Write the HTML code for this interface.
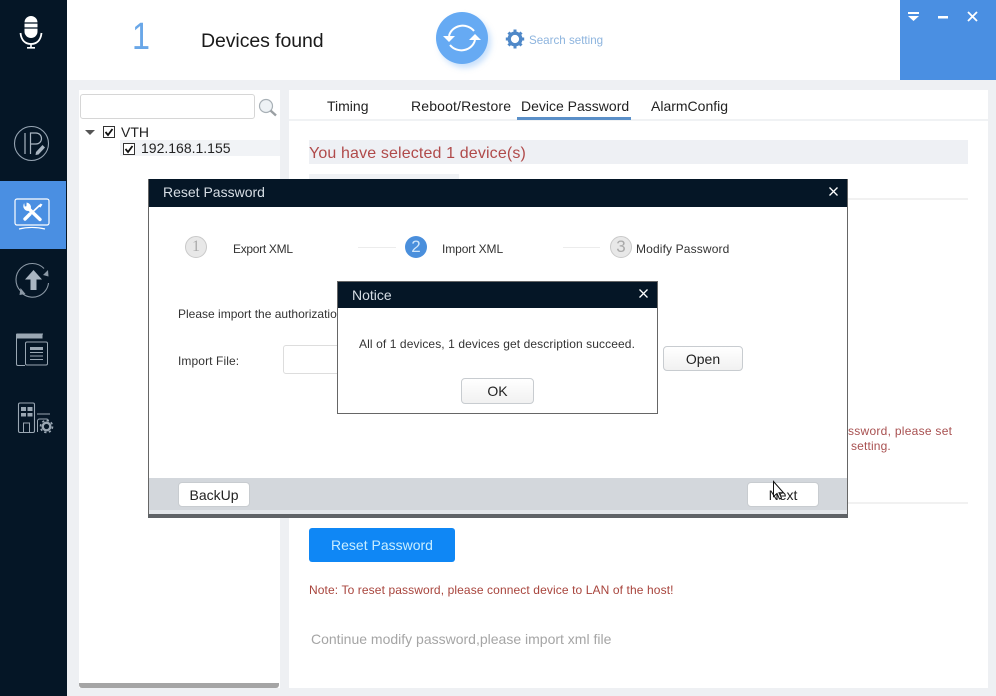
<!DOCTYPE html>
<html><head><meta charset="utf-8"><title>Reset Password</title>
<style>
html,body{margin:0;padding:0;width:996px;height:696px;overflow:hidden;background:#eef0f3;font-family:"Liberation Sans",sans-serif;}
.a{position:absolute;white-space:nowrap;}
.btn{position:absolute;box-sizing:border-box;border:1px solid #c8ccd0;border-radius:4px;background:linear-gradient(#fff,#f1f1f1);text-align:center;color:#222;font-size:14px;}
</style></head><body>
<div class="a" style="left:0;top:0;width:996px;height:696px;overflow:hidden">
<!-- top -->
<div class="a" style="left:67px;top:0;width:833px;height:80px;background:#fff"></div>
<div class="a" style="left:900px;top:0;width:96px;height:80px;background:#4a8fe2"></div>
<svg class="a" style="left:900px;top:0" width="96" height="80"><path d="M8 12h11v2H8zM8 16h11l-5.500 5z" fill="#fff"/><path d="M38 16h10v2.500H38z" fill="#fff"/><path d="M68 12l9 9M77 12l-9 9" stroke="#fff" stroke-width="1.800"/></svg>
<div class="a" style="left:132px;top:17px;font-size:38px;color:#69a7e8;line-height:40px;font-weight:normal;transform:scaleX(.85);transform-origin:left">1</div>
<div class="a" style="left:201px;top:30px;font-size:19.500px;color:#1a1a1a;line-height:22px;letter-spacing:-.08px">Devices found</div>
<div class="a" style="left:436px;top:12px;width:52px;height:52px;border-radius:50%;background:#66aaf3;box-shadow:3px 4px 6px rgba(102,170,243,.35)"></div>
<svg class="a" style="left:436px;top:12px" width="52" height="52" fill="none" stroke="#fff" stroke-width="2"><path d="M13 24A14 13 0 0 1 38 19"/><path d="M39 28A14 13 0 0 1 14 33"/><path d="M7 24h12l-6 6z" fill="#fff" stroke="none"/><path d="M33 28h12l-6-6z" fill="#fff" stroke="none"/></svg>
<svg class="a" style="left:505px;top:29px" width="20" height="20" viewBox="0 0 20 20"><circle cx="10" cy="10" r="5.800" fill="none" stroke="#4f88c8" stroke-width="3.400"/><path d="M10 10L10 .5M10 10L10 19.500M10 10L.8 10M10 10L19.200 10M10 10L3.500 3.500M10 10L16.500 16.500M10 10L16.500 3.500M10 10L3.500 16.500" stroke="#4f88c8" stroke-width="3" stroke-dasharray="9.500 20" stroke-dashoffset="-6.500"/></svg>
<div class="a" style="left:529px;top:33px;font-size:11.600px;color:#8db4de;line-height:15px">Search setting</div>

<!-- sidebar -->
<div class="a" style="left:0;top:0;width:67px;height:696px;background:#051626"></div>
<div class="a" style="left:0;top:181px;width:66px;height:68px;background:#4a8fe2"></div>
<svg class="a" style="left:0;top:0" width="67" height="450" fill="none">
<rect x="24.500" y="16" width="13" height="22" rx="6.500" fill="#fff"/><path d="M24 23h14M24 28h14" stroke="#051626" stroke-width="1.300"/>
<path d="M20.500 33c.8 7.500 5 11 10.500 11s9.700-3.500 10.500-11" stroke="#fff" stroke-width="1.800"/><path d="M31 44v3.500M27 47.800h8" stroke="#fff" stroke-width="1.600"/>
<circle cx="31.500" cy="143.500" r="17" stroke="#96a4b2" stroke-width="1.100"/>
<path d="M25 133v21M30.500 154v-21h5.500a5.500 5.500 0 0 1 0 11h-5.500" stroke="#a9b5c1" stroke-width="1.200"/><path d="M36 152l6.500-7 2.500 2.500-6.500 7-3 .5z" fill="#a9b5c1"/>
<rect x="15" y="199" width="34" height="26" rx="2" stroke="#fff" stroke-width="1.200"/>
<path d="M28 208l12 11.500" stroke="#fff" stroke-width="3.400" stroke-linecap="round"/>
<path d="M24 204.500a4.500 4.500 0 0 0 4.500 6l2-2a4.500 4.500 0 0 0-3.500-5.500l-.2 3.500-2.300.5z" fill="#fff" stroke="#fff" stroke-width=".8"/>
<path d="M40 205l-9.500 9" stroke="#fff" stroke-width="1.600"/><path d="M30 214l-5 5" stroke="#fff" stroke-width="3.400" stroke-linecap="round"/><path d="M38.500 206.500l2-3 2 1-2 3z" fill="#fff"/>
<path d="M19 229c8-2 18-2 26 0" stroke="#fff" stroke-width="1.200"/>
<path d="M20.500 291A16 16 0 0 1 44 268.500" stroke="#8c99a6" stroke-width="1.100"/>
<path d="M48.500 283A16 16 0 0 1 23 294" stroke="#8c99a6" stroke-width="1.100"/>
<path d="M43 275l5-5 .5 6.500zM20.500 288l5 6-6 1z" fill="#8c99a6"/>
<path d="M33.500 270l-8.500 9.500h5.500v10.500h6v-10.500h5.500z" fill="#a9b5c1"/>
<path d="M43 334h-25.500a1.500 1.500 0 0 0-1 1v29a1.500 1.500 0 0 0 1.500 1.500h7" stroke="#9aa7b3" stroke-width="1"/><path d="M16 334.500a1 1 0 0 1 1-1h25.500v5H16z" fill="#9aa7b3"/>
<rect x="25.500" y="342" width="22" height="23" rx="1.500" stroke="#9aa7b3" stroke-width="1"/>
<path d="M30 347h13v3H30z" fill="#9aa7b3"/><path d="M30 352.500h13M30 356h13M30 359.500h13" stroke="#9aa7b3" stroke-width="1"/>
<rect x="18.500" y="403" width="16" height="29.500" rx="1.500" stroke="#9aa7b3" stroke-width="1.100"/>
<path d="M21 407h5v4h-5zM27.500 407h5v4h-5zM21 413h5v3.500h-5zM27.500 413h5v3.500h-5z" fill="#9aa7b3"/><rect x="23.500" y="423" width="6" height="9.500" stroke="#9aa7b3" stroke-width="1"/>
<path d="M37 414h13" stroke="#9aa7b3"/><path d="M37.500 432v-11a2 2 0 0 1 2-2h7a2 2 0 0 1 2 2" stroke="#9aa7b3"/>
<circle cx="46.500" cy="426.500" r="3.800" stroke="#9aa7b3" stroke-width="2.400"/><circle cx="46.500" cy="426.500" r="6" stroke="#9aa7b3" stroke-width="1.600" stroke-dasharray="2.300 2.400"/>
</svg>

<!-- left panel -->
<div class="a" style="left:79px;top:90px;width:201px;height:598px;background:#fff"></div>
<div class="a" style="left:80px;top:94px;width:175px;height:25px;box-sizing:border-box;border:1px solid #d6d6d6;border-radius:3px;background:#fff"></div>
<svg class="a" style="left:258px;top:98px" width="20" height="20" fill="none"><circle cx="8" cy="8" r="6.500" fill="#eef2f5" stroke="#a8b0b6" stroke-width="1.200"/><path d="M12.500 12.500l5.500 5" stroke="#9a9fa3" stroke-width="2.400"/></svg>
<svg class="a" style="left:84px;top:128px" width="12" height="10"><path d="M1 2h10l-5 5z" fill="#555"/></svg>
<div class="a" style="left:120px;top:140px;width:160px;height:16px;background:#f1f3f6"></div>
<svg class="a" style="left:103px;top:126px" width="13" height="13"><rect x=".5" y=".5" width="11" height="11" fill="#fff" stroke="#333"/><path d="M2.500 6l2.500 3 4.500-6" fill="none" stroke="#111" stroke-width="1.800"/></svg>
<svg class="a" style="left:123px;top:143px" width="13" height="13"><rect x=".5" y=".5" width="11" height="11" fill="#fff" stroke="#333"/><path d="M2.500 6l2.500 3 4.500-6" fill="none" stroke="#111" stroke-width="1.800"/></svg>
<div class="a" style="left:121px;top:124px;font-size:14px;color:#222;line-height:16px">VTH</div>
<div class="a" style="left:141px;top:140px;font-size:14px;color:#222;line-height:16px">192.168.1.155</div>
<div class="a" style="left:79px;top:683px;width:200px;height:5px;background:#a5a5a5;border-radius:0 0 3px 3px"></div>

<!-- right panel -->
<div class="a" style="left:289px;top:90px;width:699px;height:598px;background:#fff"></div>
<div class="a" style="left:289px;top:119px;width:699px;height:2px;background:#f0f2f4"></div>
<div class="a" style="left:327px;top:98px;font-size:14px;color:#222;line-height:16px">Timing</div>
<div class="a" style="left:411px;top:98px;font-size:14px;color:#222;line-height:16px;letter-spacing:.15px">Reboot/Restore</div>
<div class="a" style="left:521px;top:98px;font-size:14px;color:#222;line-height:16px">Device Password</div>
<div class="a" style="left:651px;top:98px;font-size:14px;color:#222;line-height:16px">AlarmConfig</div>
<div class="a" style="left:517px;top:117px;width:114px;height:3px;background:#5a8fc8"></div>
<div class="a" style="left:309px;top:140px;width:659px;height:24px;background:#eef0f4"></div>
<div class="a" style="left:309px;top:145px;font-size:16px;color:#b04a4a;line-height:18px;letter-spacing:.14px">You have selected 1 device(s)</div>
<div class="a" style="left:309px;top:174px;width:150px;height:6px;background:#f0f2f5"></div>
<div class="a" style="left:848px;top:198px;width:120px;height:2px;background:#f1f1f1"></div>
<div class="a" style="left:848px;top:502px;width:120px;height:2px;background:#f1f1f1"></div>
<div class="a" style="left:848px;top:424px;font-size:12px;color:#a85050;line-height:15px;letter-spacing:.27px">ssword, please set</div>
<div class="a" style="left:851px;top:439px;font-size:12px;color:#a85050;line-height:15px;letter-spacing:.15px">setting.</div>
<div class="a" style="left:309px;top:528px;width:146px;height:34px;background:#0f87f5;border-radius:3px;color:#c9eeff;font-size:14px;line-height:34px;text-align:center">Reset Password</div>
<div class="a" style="left:309px;top:583px;font-size:12px;color:#a8443c;line-height:15px;letter-spacing:.11px">Note: To reset password, please connect device to LAN of the host!</div>
<div class="a" style="left:311px;top:631px;font-size:14px;color:#a5a5a5;line-height:16px">Continue modify password,please import xml file</div>

<!-- dialog -->
<div class="a" style="left:148px;top:179px;width:700px;height:339px;box-sizing:border-box;background:#fff;border:1px solid #666;border-bottom:none"></div>
<div class="a" style="left:149px;top:179px;width:698px;height:28px;background:#051626"></div>
<div class="a" style="left:163px;top:184px;font-size:14px;color:#d6dde4;line-height:16px">Reset Password</div>
<svg class="a" style="left:828px;top:186px" width="11" height="11"><path d="M1.500 1.500l8 8M9.500 1.500l-8 8" stroke="#fff" stroke-width="1.300"/></svg>
<div class="a" style="left:185px;top:236px;width:20px;height:20px;box-sizing:content-box;border:1px solid #c9c9c9;border-radius:50%;background:#e8e8e8;color:#aaa;font-size:16px;line-height:20px;text-align:center;font-family:'Liberation Serif',serif">1</div>
<div class="a" style="left:233px;top:242px;font-size:12px;color:#333;line-height:15px;letter-spacing:-.3px">Export XML</div>
<div class="a" style="left:358px;top:247px;width:38px;height:1px;background:#ececec"></div>
<div class="a" style="left:405px;top:236px;width:22px;height:22px;border-radius:50%;background:#4a8fdc;color:#cfe6fb;font-size:17px;line-height:22px;text-align:center">2</div>
<div class="a" style="left:442px;top:242px;font-size:12px;color:#333;line-height:15px;letter-spacing:-.1px">Import XML</div>
<div class="a" style="left:563px;top:247px;width:37px;height:1px;background:#ececec"></div>
<div class="a" style="left:610px;top:236px;width:20px;height:20px;border:1px solid #c9c9c9;border-radius:50%;background:#e8e8e8;color:#aaa;font-size:17px;line-height:20px;text-align:center">3</div>
<div class="a" style="left:636px;top:242px;font-size:12px;color:#333;line-height:15px;letter-spacing:.14px">Modify Password</div>
<div class="a" style="left:178px;top:307px;font-size:12px;color:#333;line-height:15px">Please import the authorization</div>
<div class="a" style="left:178px;top:354px;font-size:12px;color:#333;line-height:15px;letter-spacing:.1px">Import File:</div>
<div class="a" style="left:283px;top:345px;width:60px;height:29px;box-sizing:border-box;border:1px solid #ddd;border-radius:3px;background:#fff"></div>
<div class="btn" style="left:663px;top:346px;width:80px;height:25px;line-height:24px">Open</div>
<div class="a" style="left:149px;top:478px;width:698px;height:32px;background:#d3d7dc"></div>
<div class="a" style="left:149px;top:510px;width:698px;height:4px;background:#e2e5e9"></div>
<div class="a" style="left:148px;top:514px;width:700px;height:4px;background:#5f6266"></div>
<div class="btn" style="left:178px;top:482px;width:72px;height:25px;line-height:24px;background:#fff">BackUp</div>
<div class="btn" style="left:747px;top:482px;width:72px;height:25px;line-height:24px;background:#fff">Next</div>
<svg class="a" style="left:772px;top:480px" width="14" height="22"><path d="M1.500 1.500v15l3.500-3 2.500 5.500 2-1-2.500-5.200h4.500z" fill="#fff" stroke="#111" stroke-width="1"/></svg>

<!-- notice -->
<div class="a" style="left:337px;top:281px;width:321px;height:133px;box-sizing:border-box;background:#fff;border:1px solid #666"></div>
<div class="a" style="left:338px;top:282px;width:319px;height:26px;background:#051626"></div>
<div class="a" style="left:352px;top:287px;font-size:14px;color:#d6dde4;line-height:16px">Notice</div>
<svg class="a" style="left:638px;top:288px" width="11" height="11"><path d="M1.500 1.500l8 8M9.500 1.500l-8 8" stroke="#fff" stroke-width="1.300"/></svg>
<div class="a" style="left:359px;top:337px;font-size:12px;color:#333;line-height:15px;letter-spacing:.1px">All of 1 devices, 1 devices get description succeed.</div>
<div class="btn" style="left:461px;top:378px;width:73px;height:26px;line-height:25px">OK</div>
</div>
</body></html>
